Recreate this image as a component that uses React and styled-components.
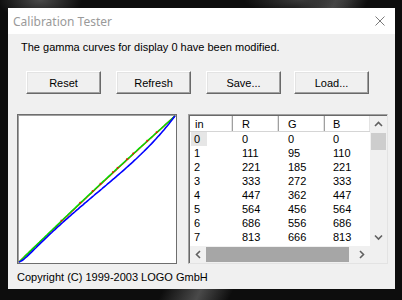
import React from "react"
import styled, { createGlobalStyle } from "styled-components"

const GlobalStyle = createGlobalStyle`
  html, body {
    margin: 0;
    padding: 0;
  }
  body {
    width: 402px;
    height: 300px;
    overflow: hidden;
    font-family: "Liberation Sans", Arial, sans-serif;
    background:
      radial-gradient(ellipse 60px 30px at 40px 0px, #4a4a4a 0%, transparent 70%),
      radial-gradient(ellipse 80px 20px at 300px 0px, #3a3a3a 0%, transparent 70%),
      linear-gradient(115deg, transparent 55%, #4a4a4a 62%, transparent 68%),
      #0d0d0d;
  }
`

const Window = styled.div`
  margin: 8px 0 0 8px;
  width: 387px;
  height: 281px;
  background: #f0f0f0;
  display: flex;
  flex-direction: column;
`

const TitleBar = styled.div`
  height: 26px;
  flex: none;
  background: #fff;
  display: flex;
  align-items: center;
  justify-content: space-between;
  padding: 0 10px 0 5px;
`

const Title = styled.span`
  font-family: "Noto Sans", "Open Sans", sans-serif;
  font-size: 12px;
  color: #9a9a9a;
`

const Body = styled.div`
  flex: 1;
  display: flex;
  flex-direction: column;
  font-size: 11px;
  color: #000;
`

const Message = styled.div`
  margin: 7px 0 0 13px;
  line-height: 13px;
`

const ButtonRow = styled.div`
  display: flex;
  gap: 15px;
  margin: 17px 0 0 18px;
`

const Button = styled.button`
  width: 75px;
  height: 23px;
  margin-left: ${p => p.$shift || 0}px;
  padding: 0;
  font-family: "Liberation Sans", Arial, sans-serif;
  font-size: 11px;
  color: #000;
  background: #f0f0f0;
  border: 1px solid;
  border-color: #fff #696969 #696969 #fff;
  box-shadow: inset -1px -1px #a0a0a0, inset 1px 1px #e3e3e3;
`

const Panels = styled.div`
  display: flex;
  gap: 11px;
  margin: 20px 0 0 9px;
`

const Graph = styled.div`
  width: 160px;
  height: 150px;
  box-sizing: border-box;
  background: #fff;
  border: 1px solid #6e6e6e;
  box-shadow: inset 1px 1px #a0a0a0;
  display: flex;
`

const Table = styled.div`
  width: 200px;
  height: 150px;
  box-sizing: border-box;
  border: 1px solid;
  border-color: #a0a0a0 #e3e3e3 #e3e3e3 #a0a0a0;
  box-shadow: inset 1px 1px #696969;
  padding: 1px 0 0 1px;
  display: grid;
  grid-template-columns: 1fr 17px;
  grid-template-rows: 1fr 17px;
  background: #fff;
`

const ListArea = styled.div`
  overflow: hidden;
  background: #fff;
`

const HeaderRow = styled.div`
  display: flex;
  height: 16px;
  border-bottom: 1px solid #d5d5d5;
  box-sizing: border-box;
`

const HeaderCell = styled.div`
  width: ${p => p.$w}px;
  flex: none;
  box-sizing: border-box;
  padding-left: ${p => p.$pad}px;
  line-height: 16px;
  border-right: 1px solid #a0a0a0;
  box-shadow: inset -1px 0 #e3e3e3;
`

const Row = styled.div`
  display: flex;
  height: 14px;
`

const Cell = styled.div`
  width: ${p => p.$w}px;
  flex: none;
  box-sizing: border-box;
  padding-left: ${p => p.$pad}px;
  line-height: 14px;
`

const Focus = styled.span`
  display: inline-block;
  width: 16px;
  margin-left: -3px;
  padding-left: 3px;
  box-sizing: border-box;
  background: #e6e6e6;
`

const VScroll = styled.div`
  background: #f0f0f0;
  display: flex;
  flex-direction: column;
`

const HScroll = styled.div`
  background: #f0f0f0;
  display: flex;
  align-items: center;
`

const ArrowBox = styled.div`
  width: 17px;
  height: 17px;
  flex: none;
  display: flex;
  align-items: center;
  justify-content: center;
`

const VThumb = styled.div`
  margin: 0 1px;
  height: 17px;
  background: #cdcdcd;
`

const HThumb = styled.div`
  width: 143px;
  height: 15px;
  margin-left: -1px;
  background: #a6a6a6;
`

const Spacer = styled.div`
  flex: 1;
`

const Corner = styled.div`
  background: #f0f0f0;
`

const Copyright = styled.div`
  margin: 7px 0 0 9px;
  line-height: 13px;
`

const cols = [
  { name: "in", w: 43, pad: 5 },
  { name: "R", w: 46, pad: 9 },
  { name: "G", w: 46, pad: 9 },
  { name: "B", w: 46, pad: 8 },
]

const rows = [
  [0, 0, 0, 0],
  [1, 111, 95, 110],
  [2, 221, 185, 221],
  [3, 333, 272, 333],
  [4, 447, 362, 447],
  [5, 564, 456, 564],
  [6, 686, 556, 686],
  [7, 813, 666, 813],
]

const Chevron = ({ dir }) => {
  const d = {
    up: "M1 5 L4.5 1.5 L8 5",
    down: "M1 1.5 L4.5 5 L8 1.5",
    left: "M5 1 L1.5 4.5 L5 8",
    right: "M2 1 L5.5 4.5 L2 8",
  }[dir]
  const vertical = dir === "up" || dir === "down"
  return (
    <svg width={vertical ? 9 : 7} height={vertical ? 7 : 9} viewBox={vertical ? "0 0 9 7" : "0 0 7 9"}>
      <path d={d} fill="none" stroke="#606060" strokeWidth="1.6" />
    </svg>
  )
}

const W = 156
const H = 146

const green = t => t + 0.012 * Math.sin(Math.PI * t)
const red = t => t + 0.008 * Math.sin(Math.PI * t)
const blue = t =>
  t - 0.42 * t * t * t * (1 - t) - 0.025 * (1 - Math.exp(-t * 30)) * Math.exp(-t * 8)

const curve = fn => {
  const pts = []
  for (let i = 0; i <= 100; i++) {
    const t = i / 100
    pts.push(`${(t * W).toFixed(1)},${(H - H * fn(t)).toFixed(1)}`)
  }
  return pts.join(" ")
}

const GammaPlot = () => {
  const reds = [0.27, 0.39, 0.47, 0.52, 0.6, 0.63, 0.69, 0.73, 0.82, 0.88]
  return (
    <svg width="158" height="148" viewBox="-1 -1 158 148">
      <polyline points={curve(red)} fill="none" stroke="#ff0000" strokeWidth="1.3" />
      <polyline points={curve(green)} fill="none" stroke="#00e000" strokeWidth="1.5" />
      <polyline points={curve(blue)} fill="none" stroke="#0000ff" strokeWidth="1.6" />
      {reds.map(t => (
        <rect
          key={t}
          x={t * W - 0.5}
          y={H - H * green(t) - 1.5}
          width="1.6"
          height="1.6"
          fill="#ff0000"
        />
      ))}
    </svg>
  )
}

const App = () => {
  return (
    <>
      <GlobalStyle />
      <Window>
        <TitleBar>
          <Title>Calibration Tester</Title>
          <svg width="10" height="10" viewBox="0 0 10 10">
            <path d="M0.5 0.5 L9.5 9.5 M9.5 0.5 L0.5 9.5" stroke="#7a7a7a" strokeWidth="1" />
          </svg>
        </TitleBar>
        <Body>
          <Message>The gamma curves for display 0 have been modified.</Message>
          <ButtonRow>
            <Button>Reset</Button>
            <Button>Refresh</Button>
            <Button>Save...</Button>
            <Button $shift={-2}>Load...</Button>
          </ButtonRow>
          <Panels>
            <Graph>
              <GammaPlot />
            </Graph>
            <Table>
              <ListArea>
                <HeaderRow>
                  {cols.map(c => (
                    <HeaderCell key={c.name} $w={c.w} $pad={c.pad}>
                      {c.name}
                    </HeaderCell>
                  ))}
                </HeaderRow>
                {rows.map(r => (
                  <Row key={r[0]}>
                    {r.map((v, i) => (
                      <Cell key={i} $w={cols[i].w} $pad={i === 0 ? 4 : cols[i].pad}>
                        {r[0] === 0 && i === 0 ? <Focus>{v}</Focus> : v}
                      </Cell>
                    ))}
                  </Row>
                ))}
              </ListArea>
              <VScroll>
                <ArrowBox>
                  <Chevron dir="up" />
                </ArrowBox>
                <VThumb />
                <Spacer />
                <ArrowBox>
                  <Chevron dir="down" />
                </ArrowBox>
              </VScroll>
              <HScroll>
                <ArrowBox>
                  <Chevron dir="left" />
                </ArrowBox>
                <HThumb />
                <Spacer />
                <ArrowBox>
                  <Chevron dir="right" />
                </ArrowBox>
              </HScroll>
              <Corner />
            </Table>
          </Panels>
          <Copyright>Copyright (C) 1999-2003 LOGO GmbH</Copyright>
        </Body>
      </Window>
    </>
  )
}

export default App
